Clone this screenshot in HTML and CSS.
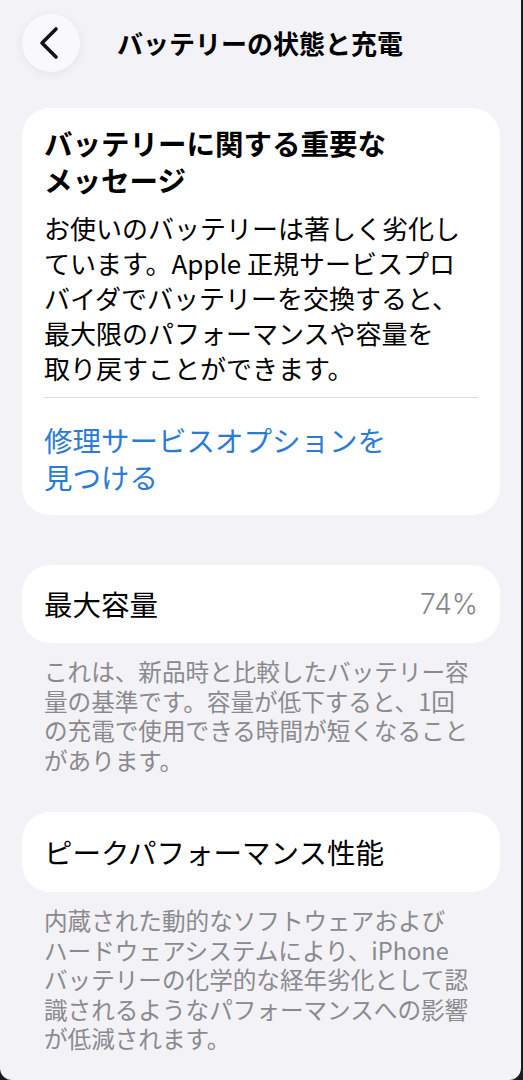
FILE: index.html
```html
<!DOCTYPE html>
<html lang="ja">
<head>
<meta charset="utf-8">
<title>バッテリーの状態と充電</title>
<link rel="stylesheet" href="styles.css">
</head>
<body>
<div class="screen">
  <header class="nav">
    <button class="back" aria-label="戻る">
      <svg width="24" height="34" viewBox="0 0 24 34"><path d="M19 3 L5 17 L19 31" fill="none" stroke="#111" stroke-width="3.6" stroke-linecap="round" stroke-linejoin="round"/></svg>
    </button>
    <h1 class="title">バッテリーの状態と充電</h1>
  </header>

  <section class="card message">
    <h2 class="msg-title">バッテリーに関する重要な<br>メッセージ</h2>
    <p class="msg-body">お使いのバッテリーは著しく劣化し<br>ています。Apple 正規サービスプロ<br>バイダでバッテリーを交換すると、<br>最大限のパフォーマンスや容量を<br>取り戻すことができます。</p>
    <div class="divider"></div>
    <a class="link" href="#">修理サービスオプションを<br>見つける</a>
  </section>

  <section class="card row">
    <span class="row-label">最大容量</span>
    <span class="row-value">74%</span>
  </section>
  <p class="footnote">これは、新品時と比較したバッテリー容<br>量の基準です。容量が低下すると、1回<br>の充電で使用できる時間が短くなること<br>があります。</p>

  <section class="card row row-perf">
    <span class="row-label">ピークパフォーマンス性能</span>
  </section>
  <p class="footnote">内蔵された動的なソフトウェアおよび<br>ハードウェアシステムにより、iPhone<br>バッテリーの化学的な経年劣化として認<br>識されるようなパフォーマンスへの影響<br>が低減されます。</p>
</div>
</body>
</html>
```
FILE: styles.css
```css
* { box-sizing: border-box; }
html, body { margin: 0; padding: 0; }
body {
  background: #1b1b1d;
  font-family: "Noto Sans CJK JP", "Noto Sans", sans-serif;
  color: #000;
}
.screen {
  width: 521px;
  height: 1080px;
  background: #f2f2f7;
  border-bottom-left-radius: 12px;
  border-bottom-right-radius: 12px;
  overflow: hidden;
  padding: 14px 0 0 0;
}
.nav {
  display: flex;
  align-items: center;
  height: 58px;
  padding-left: 22px;
}
.back {
  width: 58px;
  height: 58px;
  border-radius: 50%;
  border: none;
  background: #f9f9fb;
  box-shadow: 0 2px 10px rgba(0,0,0,0.06);
  display: flex;
  align-items: center;
  justify-content: center;
  padding: 0 4px 0 0;
}
.title {
  margin: 0 0 0 37px;
  font-size: 26px;
  font-weight: 700;
  line-height: 30px;
  letter-spacing: 0;
}
.card {
  background: #fff;
  margin: 0 22px 0 22px;
  width: 478px;
  border-radius: 28px;
}
.message {
  margin-top: 36px;
  padding: 16px 22px 20px 22px;
}
.msg-title {
  margin: 0;
  font-size: 28.5px;
  font-weight: 700;
  line-height: 37px;
}
.msg-body {
  margin: 12px 0 0 0;
  font-size: 26px;
  line-height: 35px;
  font-weight: 400;
}
.divider {
  height: 1px;
  background: #dcdce0;
  margin-top: 12px;
}
.link {
  display: block;
  margin-top: 23px;
  color: #2a7bd6;
  text-decoration: none;
  font-size: 28.5px;
  line-height: 37px;
}
.row {
  display: flex;
  align-items: center;
  justify-content: space-between;
  height: 78px;
  padding: 0 22px;
  margin-top: 50px;
}
.row-label {
  font-size: 28.5px;
  line-height: 36px;
}
.row-value {
  font-size: 28px;
  line-height: 36px;
  color: #86868a;
  font-family: "Inter", "Noto Sans", sans-serif;
  font-weight: 300;
}
.row-perf {
  height: 80px;
  margin-top: 37px;
}
.footnote {
  margin: 14px 22px 0 44px;
  font-size: 23.6px;
  line-height: 29.5px;
  color: #8a8a8e;
}
```
